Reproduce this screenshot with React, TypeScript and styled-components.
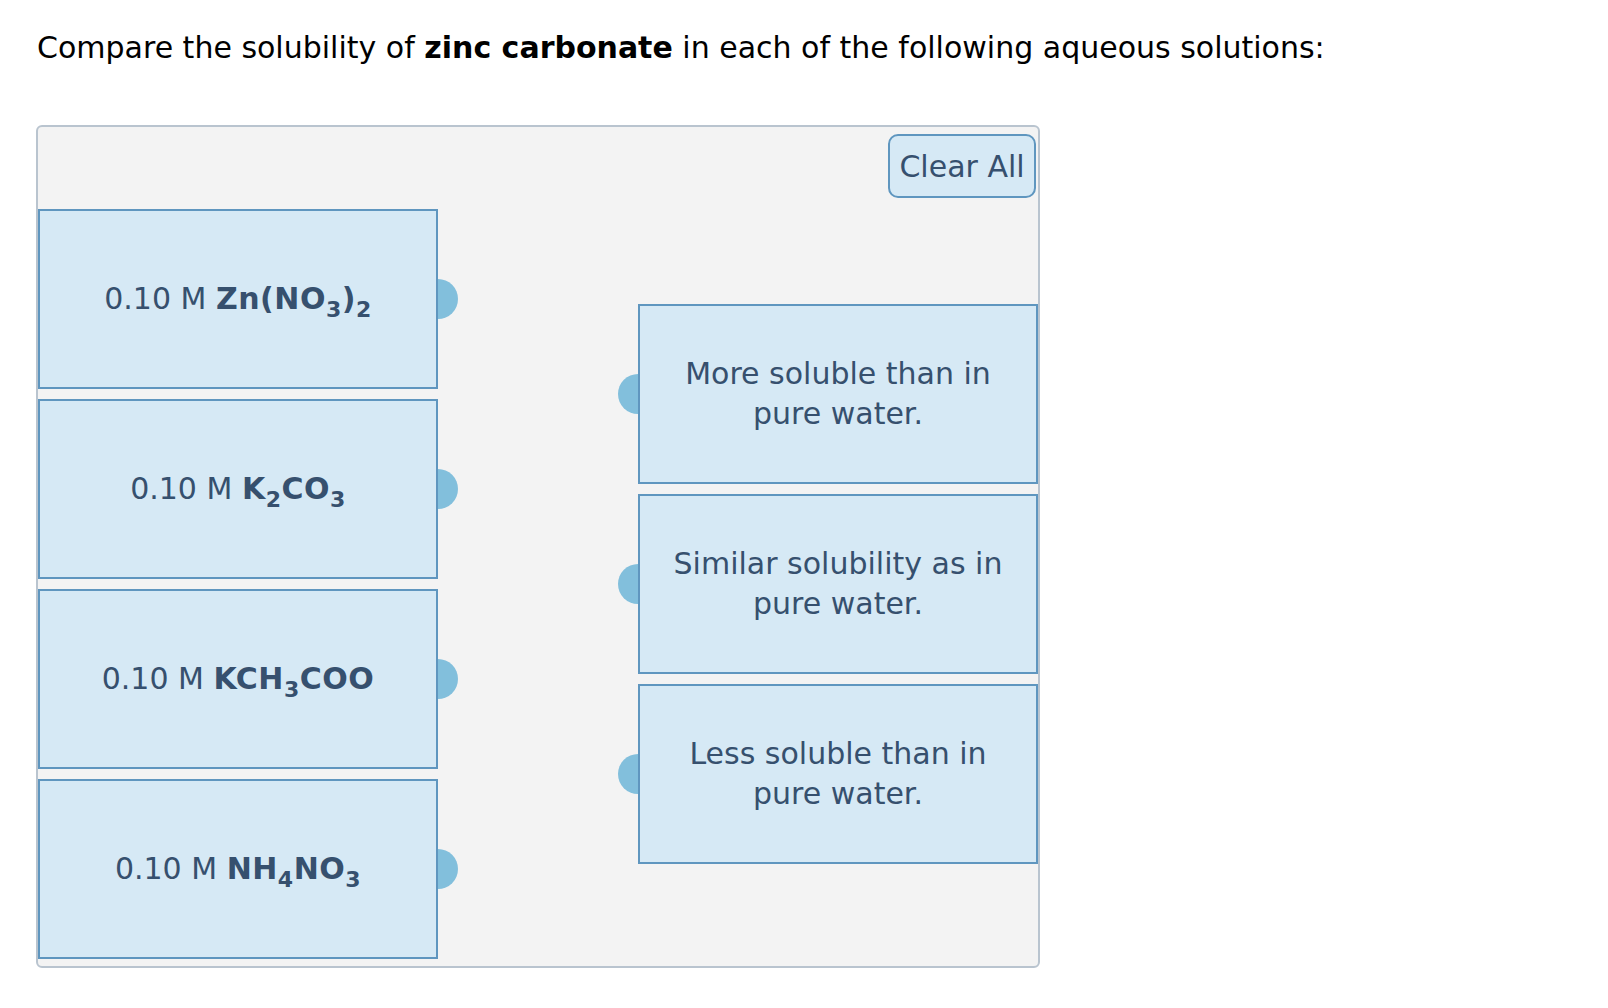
import styled, { createGlobalStyle } from "styled-components";

const GlobalStyle = createGlobalStyle`
  html, body {
    margin: 0;
    padding: 0;
    background: #ffffff;
  }
  body {
    font-family: "DejaVu Sans", Verdana, sans-serif;
  }
`;

const COLOR = {
  text: "#36506e",
  tile: "#d6e9f5",
  tileBorder: "#5f96bf",
  handle: "#82bfdc",
  board: "#f3f3f3",
  boardBorder: "#b9c4cf",
};

const Page = styled.div`
  padding: 30px 0 40px 36px;
`;

const Prompt = styled.p`
  margin: 0 0 60px 1px;
  font-size: 30px;
  line-height: 35px;
  color: #000000;
`;

const Board = styled.div`
  position: relative;
  z-index: 0;
  width: 1000px;
  padding: 7px 0;
  background: ${COLOR.board};
  border: 2px solid ${COLOR.boardBorder};
  border-radius: 6px;
`;

const Toolbar = styled.div`
  display: flex;
  justify-content: flex-end;
  padding-right: 2px;
  margin-bottom: 11px;
`;

const ClearButton = styled.button`
  width: 148px;
  height: 64px;
  padding: 0;
  font-family: inherit;
  font-size: 30px;
  color: ${COLOR.text};
  background: ${COLOR.tile};
  border: 2px solid ${COLOR.tileBorder};
  border-radius: 10px;
  cursor: pointer;
`;

const Columns = styled.div`
  display: flex;
  justify-content: space-between;
  align-items: center;
`;

const Column = styled.div`
  display: flex;
  flex-direction: column;
  gap: 10px;
`;

type Side = "left" | "right";

// a draggable tile; the round handle sits half under the tile edge
const Tile = styled.div<{ $handle: Side }>`
  position: relative;
  box-sizing: border-box;
  width: 400px;
  height: 180px;
  padding: 0 20px;
  display: flex;
  align-items: center;
  justify-content: center;
  text-align: center;
  font-size: 30px;
  line-height: 40px;
  color: ${COLOR.text};
  background: ${COLOR.tile};
  border: 2px solid ${COLOR.tileBorder};

  &::after {
    content: "";
    position: absolute;
    z-index: -1;
    top: 50%;
    ${({ $handle }) => ($handle === "right" ? "right: -22px;" : "left: -22px;")}
    width: 40px;
    height: 40px;
    margin-top: -20px;
    border-radius: 50%;
    background: ${COLOR.handle};
    filter: blur(0.4px);
  }
`;

const Formula = styled.b`
  font-weight: 700;
  letter-spacing: 0.5px;
`;

const Sub = styled.sub`
  font-size: 22px;
  line-height: 0;
  vertical-align: -8px;
`;

const sources = [
  { id: "zn", formula: <>Zn(NO<Sub>3</Sub>)<Sub>2</Sub></> },
  { id: "k2", formula: <>K<Sub>2</Sub>CO<Sub>3</Sub></> },
  { id: "kac", formula: <>KCH<Sub>3</Sub>COO</> },
  { id: "nh4", formula: <>NH<Sub>4</Sub>NO<Sub>3</Sub></> },
];

const targets = [
  "More soluble than in pure water.",
  "Similar solubility as in pure water.",
  "Less soluble than in pure water.",
];

export default function App() {
  return (
    <>
      <GlobalStyle />
      <Page>
        <Prompt>
          Compare the solubility of <strong>zinc carbonate</strong> in each of the following aqueous
          solutions:
        </Prompt>
        <Board>
          <Toolbar>
            <ClearButton>Clear All</ClearButton>
          </Toolbar>
          <Columns>
            <Column>
              {sources.map((s) => (
                <Tile key={s.id} $handle="right">
                  <span>
                    0.10 M <Formula>{s.formula}</Formula>
                  </span>
                </Tile>
              ))}
            </Column>
            <Column>
              {targets.map((t) => (
                <Tile key={t} $handle="left">
                  {t}
                </Tile>
              ))}
            </Column>
          </Columns>
        </Board>
      </Page>
    </>
  );
}
